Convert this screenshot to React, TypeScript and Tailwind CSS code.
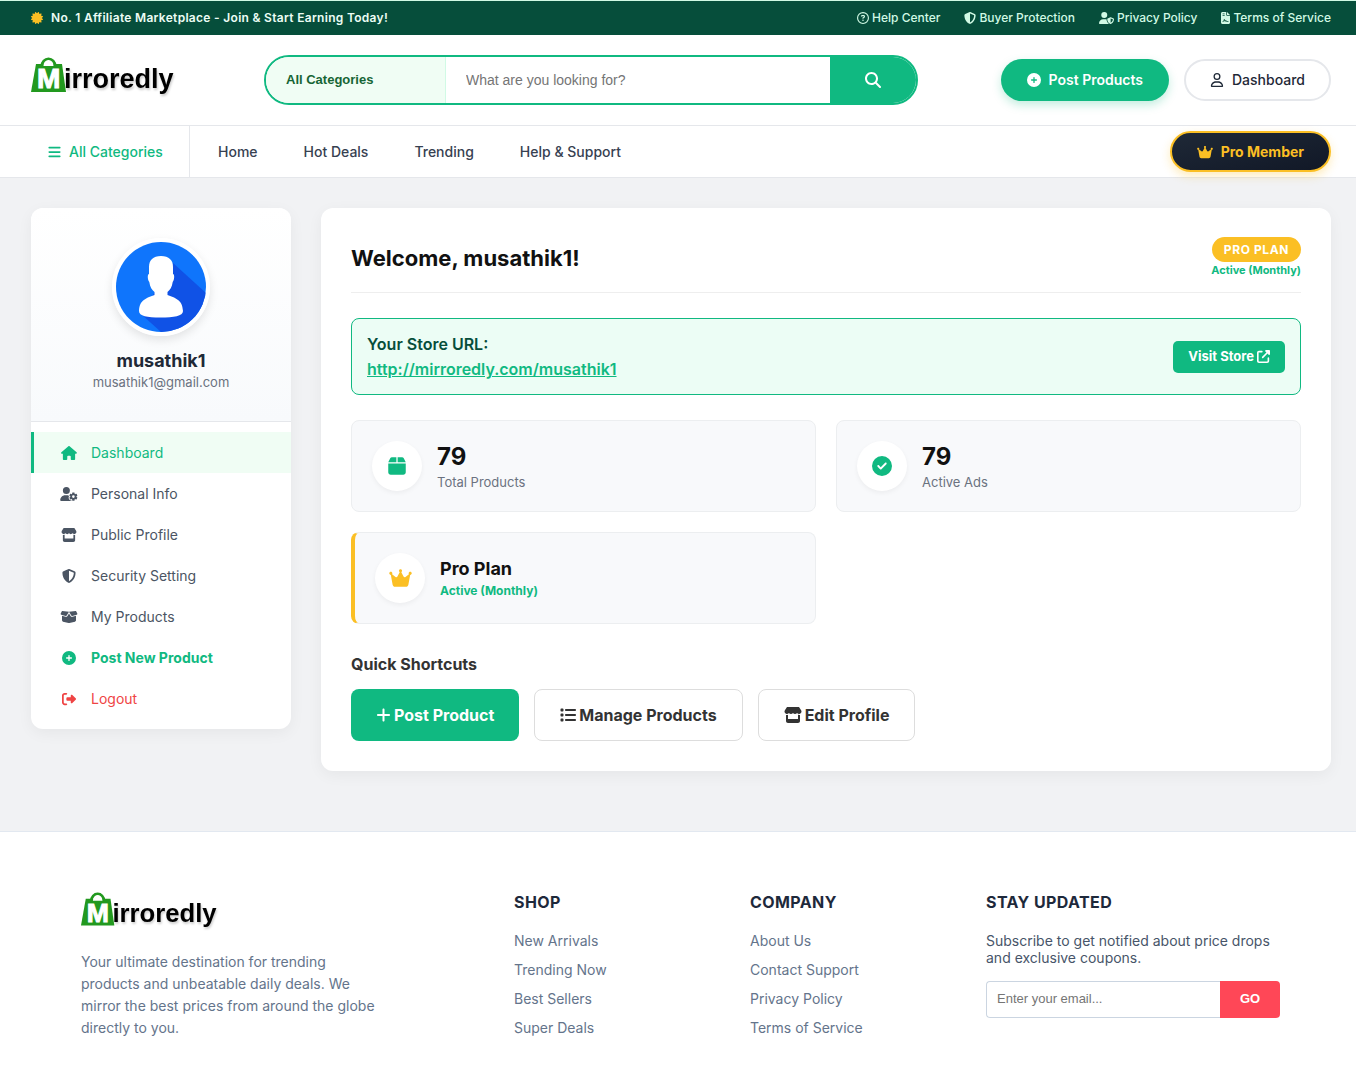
import type { ReactNode } from "react";
import {
  FaBars,
  FaBox,
  FaBoxOpen,
  FaCertificate,
  FaCircleCheck,
  FaCirclePlus,
  FaCrown,
  FaFileContract,
  FaHouse,
  FaList,
  FaMagnifyingGlass,
  FaPlus,
  FaRegCircleQuestion,
  FaRegUser,
  FaRightFromBracket,
  FaShieldHalved,
  FaStore,
  FaUpRightFromSquare,
  FaUserGear,
  FaUserShield,
} from "react-icons/fa6";

const topLinks = [
  { label: "Help Center", icon: FaRegCircleQuestion, iconStyle: "w-3" },
  { label: "Buyer Protection", icon: FaShieldHalved, iconStyle: "w-3" },
  { label: "Privacy Policy", icon: FaUserShield, iconStyle: "w-[15px]" },
  { label: "Terms of Service", icon: FaFileContract, iconStyle: "w-[9px]" },
];

const navLinks = ["Home", "Hot Deals", "Trending", "Help & Support"];

const menu = [
  { label: "Dashboard", icon: FaHouse, style: "border-[#10b981] bg-[#f0fdf4] text-[#10b981]", iconStyle: "w-4" },
  { label: "Personal Info", icon: FaUserGear, style: "border-transparent text-[#4b5563]", iconStyle: "w-[18px]" },
  { label: "Public Profile", icon: FaStore, style: "border-transparent text-[#4b5563]", iconStyle: "w-4" },
  { label: "Security Setting", icon: FaShieldHalved, style: "border-transparent text-[#4b5563]", iconStyle: "w-4" },
  { label: "My Products", icon: FaBoxOpen, style: "border-transparent text-[#4b5563]", iconStyle: "w-[18px]" },
  { label: "Post New Product", icon: FaCirclePlus, style: "border-transparent font-bold text-[#10b981]", iconStyle: "w-4" },
  { label: "Logout", icon: FaRightFromBracket, style: "border-transparent text-[#ef4444]", iconStyle: "w-4" },
];

const footerColumns = [
  { title: "Shop", links: ["New Arrivals", "Trending Now", "Best Sellers", "Super Deals"] },
  { title: "Company", links: ["About Us", "Contact Support", "Privacy Policy", "Terms of Service"] },
];

function Logo({ className }: { className: string }) {
  return (
    <svg viewBox="0 0 146 46" className={className} role="img" aria-label="Mirroredly">
      <path d="M11 9a6.500 7 0 0 1 13 0" fill="none" stroke="#22991f" strokeWidth="3" />
      <path d="M5 7h26l4 28H0z" fill="#22991f" />
      <path d="M12.500 9a5 6 0 0 1 10 0z" fill="#fff" />
      <text
        x="6"
        y="31"
        fontFamily="Liberation Sans, sans-serif"
        fontWeight="700"
        fontSize="28"
        fill="#fff"
        stroke="#fff"
        strokeWidth="1"
      >
        M
      </text>
      <text
        x="33"
        y="31"
        fontFamily="Liberation Sans, sans-serif"
        fontWeight="700"
        fontSize="27"
        fill="#000"
        className="drop-shadow-[1px_2px_1px_rgba(0,0,0,0.2)]"
      >
        irroredly
      </text>
    </svg>
  );
}

function Avatar() {
  return (
    <div className="rounded-full border-4 border-white shadow-[0_4px_10px_rgba(0,0,0,0.1)]">
      <svg viewBox="0 0 90 90" className="size-[90px]" role="img" aria-label="musathik1">
        <clipPath id="avatar">
          <circle cx="45" cy="45" r="45" />
        </clipPath>
        <g clipPath="url(#avatar)">
          <rect width="90" height="90" fill="#0f75fc" />
          <path d="M57 21l33 30v39H45L25 72z" fill="#1052e6" />
          <path
            d="M45 14c8 0 12 4 12 11v7c1.800 0 1.500 6-.3 8-.7 5-2.700 8-5.200 10v3c7 3 15 4 15.500 16 0 5-9 6.500-22.500 6.500S23 74 23 69c.5-12 8.500-13 15.500-16v-3c-2.500-2-4.500-5-5.200-10-1.800-2-2.100-8-.3-8v-7c0-7 4-11 12-11z"
            fill="#fff"
          />
        </g>
      </svg>
    </div>
  );
}

function Header() {
  return (
    <header>
      {/* Top bar */}
      <div className="flex h-[35px] items-center justify-between border-t border-[#d1fae5] bg-[#064e3b] pr-[25px] pl-[31px] text-xs">
        <p className="flex items-center gap-2 font-semibold tracking-wide text-[#ecfdf5]">
          <FaCertificate className="text-[#fbbf24]" />
          No. 1 Affiliate Marketplace - Join & Start Earning Today!
        </p>
        <div className="flex gap-6 font-medium text-[#d1fae5]">
          {topLinks.map(({ label, icon: Icon, iconStyle }) => (
            <a key={label} href="#" className="flex items-center gap-[3px]">
              <Icon className={iconStyle} />
              {label}
            </a>
          ))}
        </div>
      </div>

      {/* Logo, search and actions */}
      <div className="flex h-[90px] items-center bg-white pr-[25px] pl-[31px]">
        <a href="#" className="w-[233px]">
          <Logo className="h-[46px] w-[146px]" />
        </a>
        <form className="mr-[83px] flex h-[50px] flex-1 overflow-hidden rounded-full border-2 border-[#10b981]">
          <select
            aria-label="Category"
            className="w-[180px] appearance-none border-r border-[#d1fae5] bg-[#f0fdf4] px-5 font-['Liberation_Sans',sans-serif] text-[13px] font-bold text-[#166534]"
          >
            <option>All Categories</option>
          </select>
          <input
            type="text"
            aria-label="Search"
            placeholder="What are you looking for?"
            className="min-w-0 flex-1 px-5 font-['Liberation_Sans',sans-serif] text-sm placeholder:text-[#757575]"
          />
          <button type="button" aria-label="Search" className="flex w-[86px] items-center justify-center bg-[#10b981] text-white">
            <FaMagnifyingGlass />
          </button>
        </form>
        <div className="flex gap-[15px] text-sm">
          <button
            type="button"
            className="flex h-[42px] items-center gap-2 rounded-full bg-[#10b981] px-[26px] font-semibold text-white shadow-[0_4px_10px_rgba(16,185,129,0.25)]"
          >
            <FaCirclePlus />
            Post Products
          </button>
          <button
            type="button"
            className="flex h-[42px] items-center gap-2 rounded-full border-2 border-[#e5e7eb] px-6 font-medium text-[#1f2937]"
          >
            <FaRegUser />
            Dashboard
          </button>
        </div>
      </div>

      {/* Navigation */}
      <nav className="flex h-[53px] items-center border-y border-[#e5e7eb] bg-white pr-[25px] text-sm font-medium text-[#374151]">
        <button type="button" className="flex w-[190px] items-center gap-2 self-stretch border-r border-[#e5e7eb] pl-12 text-[#10b981]">
          <FaBars className="w-[13px]" />
          All Categories
        </button>
        <div className="flex flex-1 gap-[46px] pl-7">
          {navLinks.map((label) => (
            <a key={label} href="#">
              {label}
            </a>
          ))}
        </div>
        <button
          type="button"
          className="flex h-[41px] items-center gap-2 rounded-full border-2 border-[#fbbf24] bg-linear-to-br from-[#1f2937] to-[#111827] px-[25px] font-bold text-[#fbbf24] shadow-[0_4px_10px_rgba(251,191,36,0.3)]"
        >
          <FaCrown className="w-4" />
          Pro Member
        </button>
      </nav>
    </header>
  );
}

function Sidebar() {
  return (
    <aside className="w-[260px] shrink-0 overflow-hidden rounded-xl bg-white shadow-[0_4px_15px_rgba(0,0,0,0.05)]">
      <div className="flex h-[214px] flex-col items-center border-b border-[#e5e7eb] bg-linear-to-b from-white to-[#f8fafc] pt-[30px]">
        <Avatar />
        <h3 className="mt-[14px] text-lg leading-[22px] font-bold text-[#1f2937]">musathik1</h3>
        <p className="text-[13px] leading-5 text-[#6b7280]">musathik1@gmail.com</p>
      </div>
      <nav className="py-2.5">
        {menu.map(({ label, icon: Icon, style, iconStyle }) => (
          <a key={label} href="#" className={`flex h-[41px] items-center gap-3 border-l-3 pl-[25px] text-sm ${style}`}>
            <span className="flex w-5 justify-center">
              <Icon className={iconStyle} />
            </span>
            {label}
          </a>
        ))}
      </nav>
    </aside>
  );
}

function StatCard({
  icon,
  cardStyle = "border-[#eceef0]",
  iconStyle = "text-[#10b981]",
  children,
}: {
  icon: ReactNode;
  cardStyle?: string;
  iconStyle?: string;
  children: ReactNode;
}) {
  return (
    <div className={`flex h-[92px] items-center gap-[15px] rounded-lg border bg-[#f8f9fb] px-5 ${cardStyle}`}>
      <span
        className={`flex size-[50px] items-center justify-center rounded-full bg-white text-xl shadow-[0_2px_5px_rgba(0,0,0,0.05)] ${iconStyle}`}
      >
        {icon}
      </span>
      <div className="pt-0.5">{children}</div>
    </div>
  );
}

function Dashboard() {
  return (
    <section className="flex-1 rounded-xl bg-white px-[30px] pb-[30px] shadow-[0_4px_15px_rgba(0,0,0,0.05)]">
      <div className="flex h-[85px] items-start justify-between border-b border-[#eee] pt-[29px]">
        <h1 className="pt-[5px] text-[22px] leading-8 font-bold text-[#111]">Welcome, musathik1!</h1>
        <div className="flex flex-col items-end">
          <span className="rounded-full bg-[#fbbf24] px-3 text-xs leading-[25px] font-bold tracking-wider text-white">PRO PLAN</span>
          <span className="text-[11px] leading-4 font-bold text-[#10b981]">Active (Monthly)</span>
        </div>
      </div>

      {/* Store URL */}
      <div className="mt-[25px] flex h-[77px] items-center justify-between rounded-lg border border-[#10b981] bg-[#ecfdf5] px-[15px]">
        <div className="text-base leading-[25px] font-semibold">
          <p className="text-[#064e3b]">Your Store URL:</p>
          <a href="#" className="text-[#10b981] underline">
            http://mirroredly.com/musathik1
          </a>
        </div>
        <a
          href="#"
          className="flex h-8 items-center gap-[3px] rounded-[5px] bg-[#10b981] px-[15px] text-[13px] font-bold text-white"
        >
          Visit Store
          <FaUpRightFromSquare />
        </a>
      </div>

      {/* Stats */}
      <div className="mt-[25px] grid grid-cols-2 gap-5">
        <StatCard icon={<FaBox />}>
          <p className="text-2xl leading-[30px] font-bold text-[#111]">79</p>
          <p className="text-[13px] leading-5 text-[#6b7280]">Total Products</p>
        </StatCard>
        <StatCard icon={<FaCircleCheck />}>
          <p className="text-2xl leading-[30px] font-bold text-[#111]">79</p>
          <p className="text-[13px] leading-5 text-[#6b7280]">Active Ads</p>
        </StatCard>
        <StatCard
          icon={<FaCrown className="w-[23px]" />}
          cardStyle="border-l-4 border-[#eceef0] border-l-[#fbbf24]"
          iconStyle="text-[#fbbf24]"
        >
          <p className="text-lg leading-6 font-bold text-[#111]">Pro Plan</p>
          <p className="text-xs leading-5 font-bold text-[#10b981]">Active (Monthly)</p>
        </StatCard>
      </div>

      {/* Shortcuts */}
      <h2 className="mt-7 text-base leading-6 font-bold text-[#333]">Quick Shortcuts</h2>
      <div className="mt-[13px] flex gap-[15px] text-base font-bold text-[#333]">
        <button type="button" className="flex h-[52px] items-center gap-[3px] rounded-lg bg-[#10b981] px-[25px] text-white">
          <FaPlus className="w-[15px]" />
          Post Product
        </button>
        <button type="button" className="flex h-[52px] items-center gap-[3px] rounded-lg border border-[#ddd] px-[25px]">
          <FaList />
          Manage Products
        </button>
        <button type="button" className="flex h-[52px] items-center gap-[3px] rounded-lg border border-[#ddd] px-[25px]">
          <FaStore className="w-[18px]" />
          Edit Profile
        </button>
      </div>
    </section>
  );
}

function Footer() {
  return (
    <footer className="mt-[60px] flex border-t border-[#e2e8f0] bg-white pt-[60px] pr-[76px] pb-[30px] pl-[81px] text-sm text-[#64748b]">
      <div className="flex-1">
        <Logo className="h-[44px] w-[139px]" />
        <p className="mt-[15px] w-[300px] leading-[22px]">
          Your ultimate destination for trending products and unbeatable daily deals. We mirror the best prices from around the
          globe directly to you.
        </p>
      </div>
      {footerColumns.map(({ title, links }) => (
        <div key={title} className="w-[236px]">
          <h4 className="text-base leading-5 font-bold tracking-wide text-[#1e293b] uppercase">{title}</h4>
          <ul className="mt-[14px] leading-[29px]">
            {links.map((label) => (
              <li key={label}>
                <a href="#">{label}</a>
              </li>
            ))}
          </ul>
        </div>
      ))}
      <div className="w-[294px]">
        <h4 className="text-base leading-5 font-bold tracking-wide text-[#1e293b] uppercase">Stay Updated</h4>
        <p className="mt-5 leading-[17px] text-[#475569]">Subscribe to get notified about price drops and exclusive coupons.</p>
        <form className="mt-[15px] flex h-[37px] font-['Liberation_Sans',sans-serif] text-[13px]">
          <input
            type="email"
            aria-label="Email"
            placeholder="Enter your email..."
            className="min-w-0 flex-1 rounded-l-[4px] border border-r-0 border-[#cbd5e1] px-2.5 placeholder:text-[#757575]"
          />
          <button type="button" className="w-[60px] rounded-r-[4px] bg-[#ff4757] font-bold text-white">
            GO
          </button>
        </form>
      </div>
    </footer>
  );
}

export default function App() {
  return (
    <div className="min-h-screen bg-[#f1f2f4] font-[Inter,sans-serif]">
      <Header />
      <main className="flex items-start gap-[30px] pt-[30px] pr-[25px] pl-[31px]">
        <Sidebar />
        <Dashboard />
      </main>
      <Footer />
    </div>
  );
}
